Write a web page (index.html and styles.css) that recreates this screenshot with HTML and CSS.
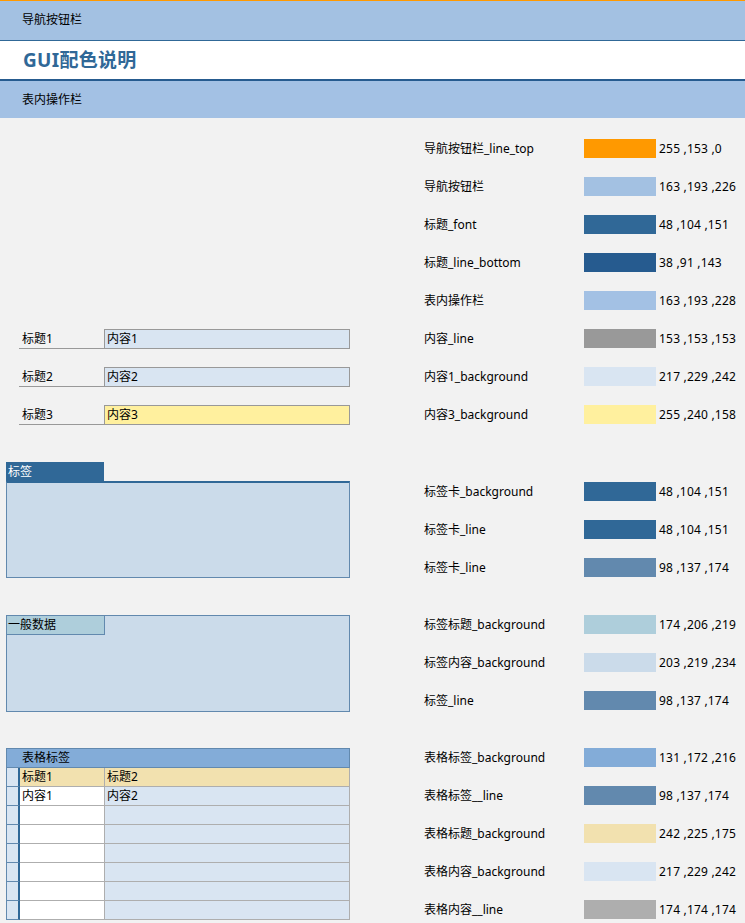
FILE: index.html
```html
<!DOCTYPE html>
<html lang="zh">
<head>
<meta charset="utf-8">
<title>GUI配色说明</title>
<link rel="stylesheet" href="styles.css">
</head>
<body>
<div class="topline"></div>
<div class="navbar">导航按钮栏</div>
<div class="titlebar">GUI配色说明</div>
<div class="opbar">表内操作栏</div>
<div class="main">
  <div class="left">
    <div class="fields">
      <div class="field"><div class="f-label">标题1</div><div class="f-value">内容1</div></div>
      <div class="field"><div class="f-label">标题2</div><div class="f-value">内容2</div></div>
      <div class="field"><div class="f-label">标题3</div><div class="f-value f-yellow">内容3</div></div>
    </div>
    <div class="tabcard">
      <div class="tabhead">标签</div>
      <div class="tabbody"></div>
    </div>
    <div class="general">
      <div class="general-label">一般数据</div>
    </div>
    <div class="tbl">
      <div class="thead">表格标签</div>
      <div class="trow ttitle"><div class="gutter"></div><div class="c1">标题1</div><div class="c2">标题2</div></div>
      <div class="trow"><div class="gutter"></div><div class="c1">内容1</div><div class="c2">内容2</div></div>
      <div class="trow"><div class="gutter"></div><div class="c1"></div><div class="c2"></div></div>
      <div class="trow"><div class="gutter"></div><div class="c1"></div><div class="c2"></div></div>
      <div class="trow"><div class="gutter"></div><div class="c1"></div><div class="c2"></div></div>
      <div class="trow"><div class="gutter"></div><div class="c1"></div><div class="c2"></div></div>
      <div class="trow"><div class="gutter"></div><div class="c1"></div><div class="c2"></div></div>
      <div class="trow"><div class="gutter"></div><div class="c1"></div><div class="c2"></div></div>
    </div>
  </div>
  <div class="right">
    <div class="group g1">
      <div class="row"><span class="name">导航按钮栏_line_top</span><span class="sw" style="background:rgb(255,153,0)"></span><span class="val">255 ,153 ,0</span></div>
      <div class="row"><span class="name">导航按钮栏</span><span class="sw" style="background:rgb(163,193,226)"></span><span class="val">163 ,193 ,226</span></div>
      <div class="row"><span class="name">标题_font</span><span class="sw" style="background:rgb(48,104,151)"></span><span class="val">48 ,104 ,151</span></div>
      <div class="row"><span class="name">标题_line_bottom</span><span class="sw" style="background:rgb(38,91,143)"></span><span class="val">38 ,91 ,143</span></div>
      <div class="row"><span class="name">表内操作栏</span><span class="sw" style="background:rgb(163,193,228)"></span><span class="val">163 ,193 ,228</span></div>
      <div class="row"><span class="name">内容_line</span><span class="sw" style="background:rgb(153,153,153)"></span><span class="val">153 ,153 ,153</span></div>
      <div class="row"><span class="name">内容1_background</span><span class="sw" style="background:rgb(217,229,242)"></span><span class="val">217 ,229 ,242</span></div>
      <div class="row"><span class="name">内容3_background</span><span class="sw" style="background:rgb(255,240,158)"></span><span class="val">255 ,240 ,158</span></div>
    </div>
    <div class="group g2">
      <div class="row"><span class="name">标签卡_background</span><span class="sw" style="background:rgb(48,104,151)"></span><span class="val">48 ,104 ,151</span></div>
      <div class="row"><span class="name">标签卡_line</span><span class="sw" style="background:rgb(48,104,151)"></span><span class="val">48 ,104 ,151</span></div>
      <div class="row"><span class="name">标签卡_line</span><span class="sw" style="background:rgb(98,137,174)"></span><span class="val">98 ,137 ,174</span></div>
    </div>
    <div class="group g3">
      <div class="row"><span class="name">标签标题_background</span><span class="sw" style="background:rgb(174,206,219)"></span><span class="val">174 ,206 ,219</span></div>
      <div class="row"><span class="name">标签内容_background</span><span class="sw" style="background:rgb(203,219,234)"></span><span class="val">203 ,219 ,234</span></div>
      <div class="row"><span class="name">标签_line</span><span class="sw" style="background:rgb(98,137,174)"></span><span class="val">98 ,137 ,174</span></div>
    </div>
    <div class="group g4">
      <div class="row"><span class="name">表格标签_background</span><span class="sw" style="background:rgb(131,172,216)"></span><span class="val">131 ,172 ,216</span></div>
      <div class="row"><span class="name">表格标签__line</span><span class="sw" style="background:rgb(98,137,174)"></span><span class="val">98 ,137 ,174</span></div>
      <div class="row"><span class="name">表格标题_background</span><span class="sw" style="background:rgb(242,225,175)"></span><span class="val">242 ,225 ,175</span></div>
      <div class="row"><span class="name">表格内容_background</span><span class="sw" style="background:rgb(217,229,242)"></span><span class="val">217 ,229 ,242</span></div>
      <div class="row"><span class="name">表格内容__line</span><span class="sw" style="background:rgb(174,174,174)"></span><span class="val">174 ,174 ,174</span></div>
    </div>
  </div>
</div>
</body>
</html>
```

FILE: styles.css
```css
* { box-sizing: border-box; }
html, body { margin: 0; padding: 0; }
body {
  background: #f2f2f2;
  font-family: "Noto Sans", "Noto Sans CJK SC", sans-serif;
  font-size: 12px;
  color: #000;
  width: 745px;
  height: 923px;
  overflow: hidden;
}
.topline { height: 1px; background: rgb(255,153,0); }
.navbar {
  height: 40px;
  background: rgb(163,193,226);
  border-bottom: 1px solid rgb(48,104,151);
  padding-left: 22px;
  line-height: 38px;
}
.titlebar {
  height: 40px;
  background: #fff;
  border-bottom: 2px solid rgb(38,91,143);
  padding-left: 23px;
  line-height: 38px;
  font-size: 19px;
  font-weight: bold;
  letter-spacing: 0.3px;
  color: rgb(48,104,151);
}
.opbar {
  height: 37px;
  background: rgb(163,193,228);
  padding-left: 22px;
  line-height: 37px;
}
.main { display: flex; }
.left { width: 344px; flex: none; margin-left: 6px; }
.right { margin-left: 74px; padding-top: 21px; }

.fields { margin-top: 211px; margin-left: 13px; display: flex; flex-direction: column; gap: 18px; }
.field { display: flex; height: 20px; line-height: 19px; }
.f-label { width: 85px; flex: none; border-bottom: 1px solid rgb(153,153,153); padding-left: 3px; }
.f-value { width: 246px; flex: none; border: 1px solid rgb(153,153,153); background: rgb(217,229,242); padding-left: 2px; line-height: 18px; }
.f-yellow { background: rgb(255,240,158); }

.tabcard { margin-top: 37px; }
.tabhead {
  width: 98px; height: 19px;
  background: rgb(48,104,151); color: #fff;
  padding-left: 2px; line-height: 19px;
}
.tabbody {
  height: 97px;
  background: rgb(203,219,234);
  border: 1px solid rgb(98,137,174);
  border-top: 2px solid rgb(48,104,151);
}

.general {
  margin-top: 37px;
  height: 97px;
  background: rgb(203,219,234);
  border: 1px solid rgb(98,137,174);
}
.general-label {
  width: 98px; height: 19px;
  background: rgb(174,206,219);
  border-right: 1px solid rgb(98,137,174);
  border-bottom: 1px solid rgb(98,137,174);
  padding-left: 1px; line-height: 18px;
}

.tbl { margin-top: 36px; width: 344px; }
.thead {
  height: 20px;
  background: rgb(131,172,216);
  border: 1px solid rgb(98,137,174);
  padding-left: 15px; line-height: 18px;
}
.trow { display: flex; height: 19px; line-height: 18px; }
.gutter {
  width: 14px; flex: none;
  background: rgb(217,229,242);
  border-left: 1px solid rgb(98,137,174);
  border-right: 2px solid rgb(48,104,151);
  border-bottom: 1px solid rgb(98,137,174);
}
.c1 {
  width: 85px; flex: none; background: #fff;
  border-right: 1px solid rgb(174,174,174);
  border-bottom: 1px solid rgb(174,174,174);
  padding-left: 2px;
}
.c2 {
  width: 245px; flex: none; background: rgb(217,229,242);
  border-right: 1px solid rgb(174,174,174);
  border-bottom: 1px solid rgb(174,174,174);
  padding-left: 2px;
}
.ttitle .c1, .ttitle .c2 { background: rgb(242,225,175); }

.group { display: flex; flex-direction: column; gap: 19px; }
.g2 { margin-top: 58px; }
.g3 { margin-top: 38px; }
.g4 { margin-top: 38px; }
.row { display: flex; height: 19px; line-height: 19px; white-space: nowrap; }
.name { width: 160px; flex: none; }
.sw { width: 72px; height: 19px; flex: none; }
.val { margin-left: 3px; letter-spacing: 0.2px; }
```
